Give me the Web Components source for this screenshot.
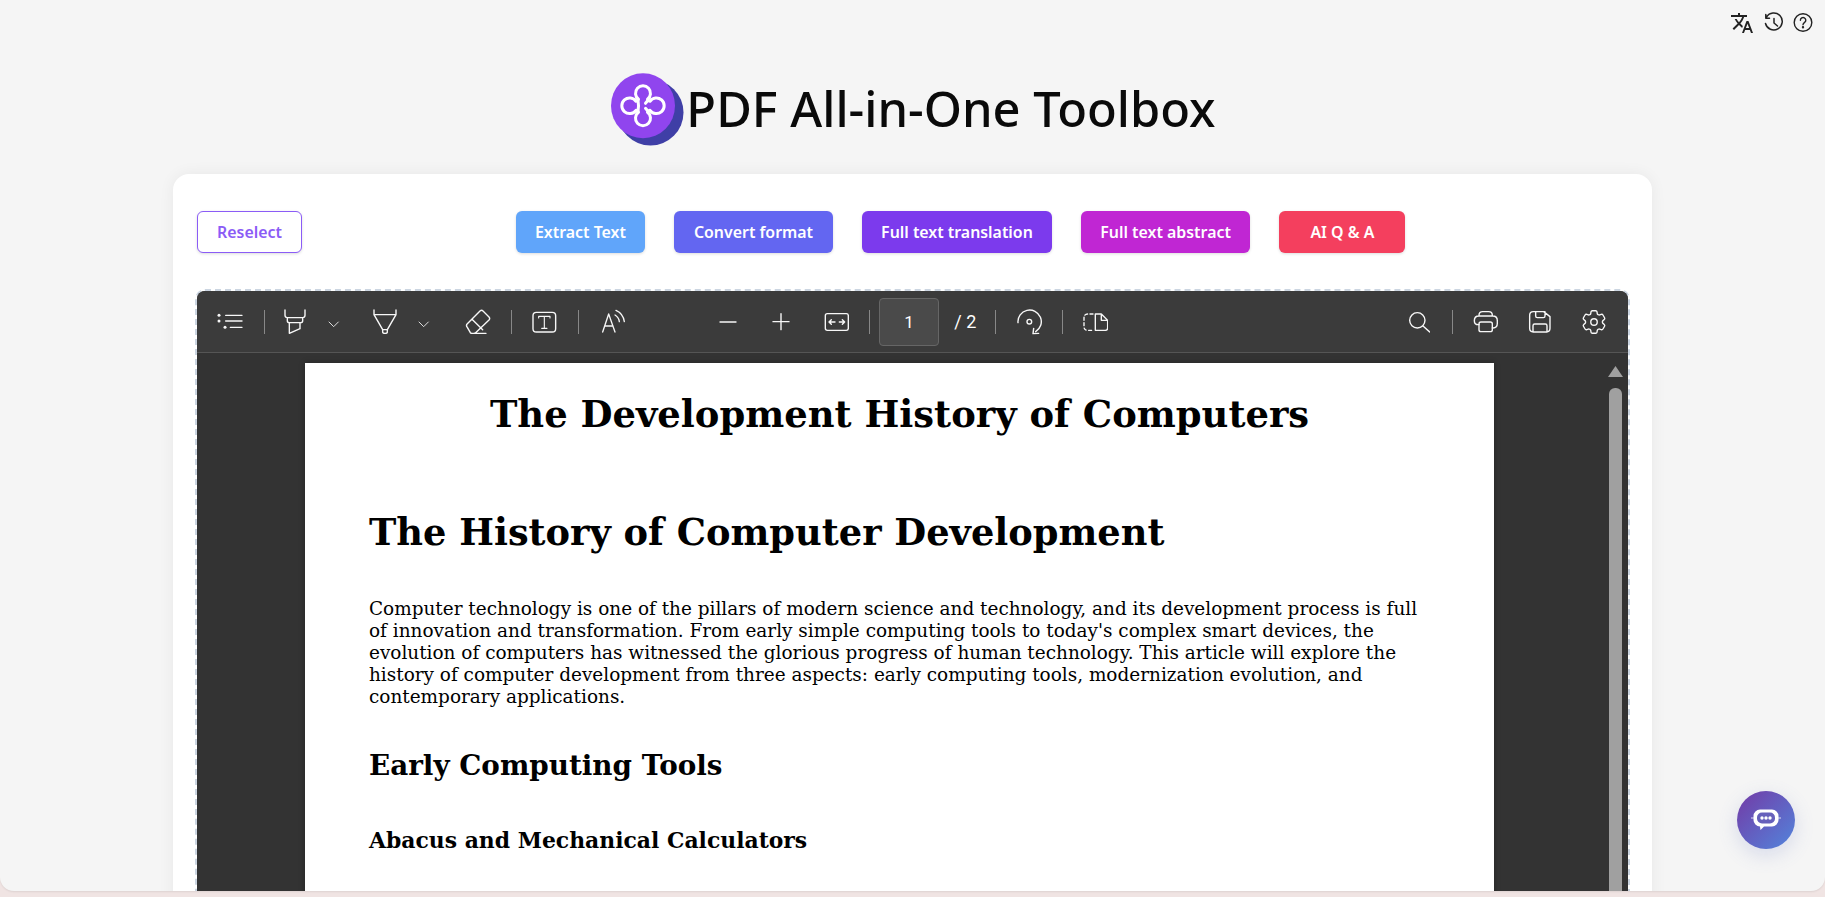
<!DOCTYPE html>
<html lang="en">
<head>
<meta charset="utf-8">
<title>PDF All-in-One Toolbox</title>
<style>
  html, body { margin: 0; height: 897px; overflow: hidden; background: #f0e4e3; }
  body { font-family: "Noto Sans", sans-serif; }
</style>
</head>
<body>
<app-shell>
  <top-actions slot="top"></top-actions>
  <brand-title slot="brand">PDF All-in-One Toolbox</brand-title>
  <tool-card slot="card">
    <action-btn slot="reselect" kind="outline">Reselect</action-btn>
    <action-btn color="#60a5fa">Extract Text</action-btn>
    <action-btn color="#6366f1" style="padding:0 20px">Convert format</action-btn>
    <action-btn color="#7c3aed">Full text translation</action-btn>
    <action-btn color="#c026d3" style="padding:0 19.500px">Full text abstract</action-btn>
    <action-btn color="#f43f5e" style="min-width:126px">AI Q &amp; A</action-btn>
    <pdf-viewer slot="viewer">
      <pdf-toolbar slot="toolbar"></pdf-toolbar>
      <pdf-page>
        <h1>The Development History of Computers</h1>
        <h2>The History of Computer Development</h2>
        <p>Computer technology is one of the pillars of modern science and technology, and its development process is full<br>of innovation and transformation. From early simple computing tools to today's complex smart devices, the<br>evolution of computers has witnessed the glorious progress of human technology. This article will explore the<br>history of computer development from three aspects: early computing tools, modernization evolution, and<br>contemporary applications.</p>
        <h3>Early Computing Tools</h3>
        <h4>Abacus and Mechanical Calculators</h4>
      </pdf-page>
    </pdf-viewer>
  </tool-card>
  <chat-fab slot="fab"></chat-fab>
</app-shell>

<script>
// paths are written in the coordinates of the 3x crops, so width = range / 3
const TOOL_ICONS = {
  list: [82, 160, `<g fill="#f7f7f7" stroke="none"><circle cx="88" cy="88" r="4.500"/><circle cx="88" cy="105" r="4.500"/><circle cx="106" cy="124" r="4.500"/></g><path d="M108 88H157M108 105H157M122 124H157"/>`],
  highlighter: [282, 348, `<path d="M285 72V88q0 7 7 7H338q7 0 7-7V72M292 95V104q0 6 6 6H332q6 0 6-6V95M298 110V142L330 128V110"/>`],
  chevron: [415, 449, `<path d="M418 108L432 122L446 108" stroke-width="2.600"/>`],
  pen: [549, 621, `<path d="M552 72V86H618V72M552 86L578 131H592L618 86M578 131V138q0 4 7 4t7-4V131"/>`],
  eraser: [825, 903, `<path d="M832 113L870 75q5-4 9 0L897 93q4 5 0 9L857 140q-2 2-6 2L846 142q-3 0-5-2L832 124q-5-6 0-11ZM846 100L878 131M855 142H888"/>`],
  textbox: [1028, 1102, `<rect x="1031" y="79" width="68" height="59" rx="10"/><path d="M1048 96V91H1082V96M1065 91V127M1057 127H1073" stroke-width="3.400"/>`],
  read: [1235, 1307, `<path d="M1240 138L1258 84L1277 138M1246 120H1271M1277 87q12 8 13 20M1280 73q22 10 25 34" stroke-width="4"/>`],
  minus: [57, 111, `<path d="M60 108H108"/>`],
  plus: [217, 271, `<path d="M220 107H268M244 83V131"/>`],
  fit: [372, 448, `<rect x="376" y="83" width="69" height="50" rx="6"/><path d="M388 108H405M394 101L387 108L394 115M418 108H434M427 101L434 108L427 115"/>`],
  rotate: [947, 1025, `<path d="M953 110A35 35 0 1 1 1006 137M1000 127L998 143L1015 142"/><circle cx="987" cy="107" r="7"/>`],
  spread: [1150, 1227, `<path d="M1180 84H1165q-12 0-12 12V122q0 11 12 11H1180" stroke-dasharray="9 7"/><path d="M1187 84H1205L1224 103V126q0 7-7 7H1187ZM1205 84V103H1224"/>`],
  search: [83, 151, `<circle cx="111" cy="103" r="23"/><path d="M128 120L148 138"/>`],
  print: [280, 356, `<path d="M298 116H296q-12 0-12-12V104q0-14 14-14H339q14 0 14 14V112q0 14-13 14H338M298 90V88q0-11 11-11H327q11 0 11 11V90"/><rect x="298" y="108" width="40" height="29" rx="6"/>`],
  save: [445, 515, `<path d="M461 77H492L511 92V127q0 11-11 11H461q-11 0-11-11V88q0-11 11-11ZM468 77V90q0 5 5 5H491q5 0 5-5V77M460 138V119q0-5 5-5H497q5 0 5 5V138"/>`]
};

class ToolIcon extends HTMLElement {
  connectedCallback() {
    const [from, to, body] = TOOL_ICONS[this.getAttribute('name')];
    const shadow = this.attachShadow({ mode: 'open' });
    shadow.innerHTML = `
      <style>
        :host { display: block; flex: none; height: 32px; }
        svg { display: block; fill: none; stroke: #f7f7f7; stroke-width: 4.200; stroke-linecap: round; stroke-linejoin: round; }
      </style>
      <svg width="${(to - from) / 3}" height="32" viewBox="${from} 60 ${to - from} 96">${body}</svg>`;
  }
}
customElements.define('tool-icon', ToolIcon);

class AppShell extends HTMLElement {
  constructor() {
    super();
    this.attachShadow({ mode: 'open' });
    this.shadowRoot.innerHTML = `
      <style>
        :host { display: block; position: relative; height: 891px; overflow: hidden; background: #f5f5f5; border-radius: 0 0 14px 14px; box-shadow: 0 1px 2px rgba(0,0,0,0.08); }
        .top { display: flex; justify-content: flex-end; height: 44px; }
        .brand { display: flex; justify-content: center; height: 130px; }
      </style>
      <div class="top"><slot name="top"></slot></div>
      <div class="brand"><slot name="brand"></slot></div>
      <slot name="card"></slot>
      <slot name="fab"></slot>
    `;
  }
}
customElements.define('app-shell', AppShell);

class TopActions extends HTMLElement {
  constructor() {
    super();
    this.attachShadow({ mode: 'open' });
    this.shadowRoot.innerHTML = `
      <style>
        :host { display: flex; align-items: flex-start; padding: 11px 12px 0 0; gap: 9px; }
        svg { display: block; }
      </style>
      <svg width="24" height="24" viewBox="0 0 24 24" fill="#222"><path d="M12.87 15.07l-2.54-2.51.03-.03c1.74-1.94 2.98-4.17 3.71-6.53H17V4h-7V2H8v2H1v1.99h11.17C11.5 7.92 10.44 9.75 9 11.35 8.07 10.32 7.3 9.19 6.69 8h-2c.73 1.63 1.73 3.17 2.98 4.56l-5.09 5.02L4 19l5-5 3.11 3.11.76-2.04zM18.5 10h-2L12 22h2l1.12-3h4.75L21 22h2l-4.5-12zm-2.62 7l1.62-4.33L19.12 17h-3.24z"/></svg>
      <svg width="21" height="24" viewBox="1 0 21 24" fill="none" stroke="#222" stroke-width="1.500" stroke-linecap="round" stroke-linejoin="round"><path d="M4.500 6A8.500 8.500 0 1 1 3.500 12.500M3.800 3.500L3.800 7.200L7.500 7.200M12 7.500V12L15.500 15"/></svg>
      <svg width="20" height="24" viewBox="0 0 20 24" fill="none" stroke="#222" stroke-width="1.400" stroke-linecap="round"><circle cx="10" cy="11.500" r="8.800"/><path d="M7.400 9.200a2.700 2.700 0 1 1 4.200 2.200c-1 .7-1.600 1.200-1.600 2.400"/><circle cx="10" cy="16.200" r=".5" fill="#222"/></svg>
    `;
  }
}
customElements.define('top-actions', TopActions);

class BrandTitle extends HTMLElement {
  constructor() {
    super();
    this.attachShadow({ mode: 'open' });
    this.shadowRoot.innerHTML = `
      <style>
        :host { display: flex; align-items: flex-start; gap: 2px; margin: 28px 0 0 2px; height: 74px; }
        svg { display: block; flex: none; }
        .name { font: 500 48.800px/72px "Noto Sans", sans-serif; color: #0a0a0a; white-space: nowrap; }
      </style>
      <svg width="73" height="74" viewBox="0 0 73 74">
        <circle cx="39.500" cy="40.500" r="33" fill="#3f3fa6"/>
        <ellipse cx="32" cy="33.800" rx="32" ry="32.500" fill="#9045ee"/>
        <g transform="translate(32 33.800)" fill="none" stroke="#fff" stroke-width="3" stroke-linecap="round" stroke-linejoin="round">
          <path d="M-4.500-6.500A7.500 7.500 0 1 1 4.500-6.500Q5-5 7-4.500A7.800 7.800 0 1 1 7 4.500Q5 5 4.500 6.500A7.500 7.500 0 1 1-4.500 6.500Q-5 5-7 4.500A7.800 7.800 0 1 1-7-4.500Q-5-5-4.500-6.500Z"/>
          <path d="M-5-5.500Q-4 0-5 5.500M5-5.500L2.500-2.500M5 5.500L2.500 2.500"/>
        </g>
      </svg>
      <span class="name"><slot></slot></span>
    `;
  }
}
customElements.define('brand-title', BrandTitle);

class ToolCard extends HTMLElement {
  constructor() {
    super();
    this.attachShadow({ mode: 'open' });
    this.shadowRoot.innerHTML = `
      <style>
        :host { display: block; width: 1479px; margin: 0 auto; box-sizing: border-box; padding: 37px 22px 0; background: #fff; border-radius: 16px 16px 0 0; box-shadow: 0 0 16px rgba(0,0,0,0.06); }
        .row { display: flex; padding-left: 2px; margin-bottom: 36px; }
        .group { display: flex; gap: 29px; margin-left: 214px; }
      </style>
      <div class="row">
        <slot name="reselect"></slot>
        <div class="group"><slot></slot></div>
      </div>
      <slot name="viewer"></slot>
    `;
  }
}
customElements.define('tool-card', ToolCard);

class ActionBtn extends HTMLElement {
  constructor() {
    super();
    this.attachShadow({ mode: 'open' });
    this.shadowRoot.innerHTML = `
      <style>
        :host { display: block; box-sizing: border-box; height: 42px; padding: 0 19px; background: var(--bg, #fff); color: var(--fg, #fff); border: var(--line, 0); border-radius: 6px; font: 600 15.900px/42px "Noto Sans", sans-serif; text-align: center; white-space: nowrap; box-shadow: 0 1px 3px rgba(0,0,0,0.14); }
      </style>
      <slot></slot>
    `;
  }
  connectedCallback() {
    if (this.getAttribute('kind') === 'outline') {
      this.style.setProperty('--fg', '#8b5cf6');
      this.style.setProperty('--line', '1px solid #8b5cf6');
      this.style.lineHeight = '40px';
      this.style.width = '105px';
      this.style.padding = '0';
    } else {
      this.style.setProperty('--bg', this.getAttribute('color'));
    }
  }
}
customElements.define('action-btn', ActionBtn);

class PdfViewer extends HTMLElement {
  constructor() {
    super();
    this.attachShadow({ mode: 'open' });
    this.shadowRoot.innerHTML = `
      <style>
        :host { display: block; border: 2px dashed #cbd5e1; border-radius: 10px; }
        .frame { border-radius: 8px 8px 0 0; overflow: hidden; background: #333; }
        .area { display: flex; align-items: flex-start; height: 560px; padding: 10px 0 0 108px; box-sizing: border-box; }
        .bar { flex: none; margin-left: auto; margin-right: 5px; margin-top: 3px; width: 15px; }
        .arrow { width: 15px; height: 11px; background: #a0a0a0; clip-path: polygon(50% 0, 100% 100%, 0 100%); }
        .thumb { width: 13px; height: 600px; margin: 11px 0 0 1px; background: #a0a0a0; border-radius: 6px; }
      </style>
      <div class="frame">
        <slot name="toolbar"></slot>
        <div class="area">
          <slot></slot>
          <div class="bar"><div class="arrow"></div><div class="thumb"></div></div>
        </div>
      </div>
    `;
  }
}
customElements.define('pdf-viewer', PdfViewer);

class PdfToolbar extends HTMLElement {
  constructor() {
    super();
    this.attachShadow({ mode: 'open' });
    this.shadowRoot.innerHTML = `
      <style>
        :host { display: flex; align-items: center; height: 62px; box-sizing: border-box; padding: 0 19px 0 20.300px; background: #3b3b3b; border-bottom: 1px solid #555; }
        .group { display: flex; align-items: center; }
        .center { margin-left: 93.300px; }
        .right { margin-left: auto; }
        .sep { flex: none; width: 1px; height: 24px; background: #888; }
        .page { flex: none; box-sizing: border-box; width: 60px; height: 48px; margin-left: 9px; border: 1px solid #666; border-radius: 4px; background: #4a4a4a; color: #fff; text-align: center; font: 17px/46px Roboto, sans-serif; }
        .total { flex: none; margin-left: 15.300px; color: #fff; font: 18px/24px Roboto, sans-serif; white-space: nowrap; }
        svg { display: block; }
      </style>
      <div class="group">
        <tool-icon name="list"></tool-icon>
        <div class="sep" style="margin-left:20.700px"></div>
        <tool-icon name="highlighter" style="margin-left:19px"></tool-icon>
        <tool-icon name="chevron" style="margin-left:22.300px"></tool-icon>
        <tool-icon name="pen" style="margin-left:33.300px"></tool-icon>
        <tool-icon name="chevron" style="margin-left:21.300px"></tool-icon>
        <tool-icon name="eraser" style="margin-left:35.300px"></tool-icon>
        <div class="sep" style="margin-left:19.700px"></div>
        <tool-icon name="textbox" style="margin-left:20.500px"></tool-icon>
        <div class="sep" style="margin-left:21.200px"></div>
        <tool-icon name="read" style="margin-left:22.500px"></tool-icon>
      </div>
      <div class="group center">
        <tool-icon name="minus"></tool-icon>
        <tool-icon name="plus" style="margin-left:35.300px"></tool-icon>
        <tool-icon name="fit" style="margin-left:33.700px"></tool-icon>
        <div class="sep" style="margin-left:20px"></div>
        <div class="page">1</div>
        <div class="total">/ 2</div>
        <div class="sep" style="margin-left:19px"></div>
        <tool-icon name="rotate" style="margin-left:19.700px"></tool-icon>
        <div class="sep" style="margin-left:20px"></div>
        <tool-icon name="spread" style="margin-left:19.700px"></tool-icon>
      </div>
      <div class="group right">
        <tool-icon name="search"></tool-icon>
        <div class="sep" style="margin-left:22px"></div>
        <tool-icon name="print" style="margin-left:20px"></tool-icon>
        <tool-icon name="save" style="margin-left:29.700px"></tool-icon>
        <svg style="margin-left:27.300px" width="30" height="30" viewBox="0 0 24 24" fill="none" stroke="#f7f7f7" stroke-width="1.100" stroke-linecap="round" stroke-linejoin="round"><path d="M9.594 3.940c.09-.542.56-.94 1.110-.94h2.593c.55 0 1.020.398 1.110.94l.213 1.281c.063.374.313.686.645.87.074.04.147.083.22.127.325.196.72.257 1.075.124l1.217-.456a1.125 1.125 0 0 1 1.370.49l1.296 2.247a1.125 1.125 0 0 1-.26 1.431l-1.003.827c-.293.241-.438.613-.43.992a7.723 7.723 0 0 1 0 .255c-.008.378.137.75.43.991l1.004.827c.424.35.534.955.26 1.430l-1.298 2.247a1.125 1.125 0 0 1-1.369.491l-1.217-.456c-.355-.133-.75-.072-1.076.124a6.470 6.470 0 0 1-.22.128c-.331.183-.581.495-.644.869l-.213 1.281c-.09.543-.56.94-1.110.94h-2.594c-.55 0-1.019-.398-1.110-.94l-.213-1.281c-.062-.374-.312-.686-.644-.87a6.520 6.520 0 0 1-.22-.127c-.325-.196-.72-.257-1.076-.124l-1.217.456a1.125 1.125 0 0 1-1.369-.49l-1.297-2.247a1.125 1.125 0 0 1 .26-1.431l1.004-.827c.292-.24.437-.613.43-.991a6.932 6.932 0 0 1 0-.255c.007-.38-.138-.751-.43-.992l-1.004-.827a1.125 1.125 0 0 1-.26-1.430l1.297-2.247a1.125 1.125 0 0 1 1.370-.491l1.216.456c.356.133.751.072 1.076-.124.072-.044.146-.086.22-.128.332-.183.582-.495.644-.869l.214-1.280Z"/><circle cx="12" cy="12" r="2.600"/></svg>
      </div>
    `;
  }
}
customElements.define('pdf-toolbar', PdfToolbar);

class PdfPage extends HTMLElement {
  constructor() {
    super();
    this.attachShadow({ mode: 'open' });
    this.shadowRoot.innerHTML = `
      <style>
        :host { display: block; flex: none; width: 1189px; height: 700px; box-sizing: border-box; padding: 29px 64px 0; background: #fff; color: #000; font-family: "DejaVu Serif", serif; box-shadow: 0 0 6px rgba(0,0,0,0.3); }
        ::slotted(h1) { margin: 0 0 74px; text-align: center; font-size: 36.900px; line-height: 44px; font-weight: 700; }
        ::slotted(h2) { margin: 0 0 44px; font-size: 36.750px; line-height: 44px; font-weight: 700; }
        ::slotted(p) { margin: 0 0 40.600px; font-size: 18.460px; line-height: 22px; white-space: nowrap; }
        ::slotted(h3) { margin: 0 0 43.400px; font-size: 27.800px; line-height: 34px; font-weight: 700; }
        ::slotted(h4) { margin: 0; font-size: 21.900px; line-height: 28px; font-weight: 700; }
      </style>
      <slot></slot>
    `;
  }
}
customElements.define('pdf-page', PdfPage);

class ChatFab extends HTMLElement {
  constructor() {
    super();
    this.attachShadow({ mode: 'open' });
    this.shadowRoot.innerHTML = `
      <style>
        :host { position: absolute; left: 1737px; top: 791px; width: 58px; height: 58px; display: flex; align-items: center; justify-content: center; border-radius: 50%; background: linear-gradient(135deg, #733aa6, #5285dc); box-shadow: 0 6px 20px rgba(90,110,190,0.2); }
        svg { display: block; }
      </style>
      <svg width="30" height="24" viewBox="0 0 30 24">
        <path d="M9 1.500H21a6.500 6.500 0 0 1 6.500 6.500V12a6.500 6.500 0 0 1-6.500 6.500H13L9.500 22L9 18.500a6.500 6.500 0 0 1-6.500-6.500V8a6.500 6.500 0 0 1 6.500-6.500Z" fill="#fff"/>
        <rect x="6" y="4.500" width="18" height="11" rx="5" fill="#6660bb"/>
        <path d="M0 10H6M24 10H30" stroke="#fff" stroke-width=".8"/>
        <g fill="#fff"><circle cx="11" cy="10" r="1.700"/><circle cx="15" cy="10" r="1.700"/><circle cx="19" cy="10" r="1.700"/></g>
      </svg>
    `;
  }
}
customElements.define('chat-fab', ChatFab);
</script>
</body>
</html>
